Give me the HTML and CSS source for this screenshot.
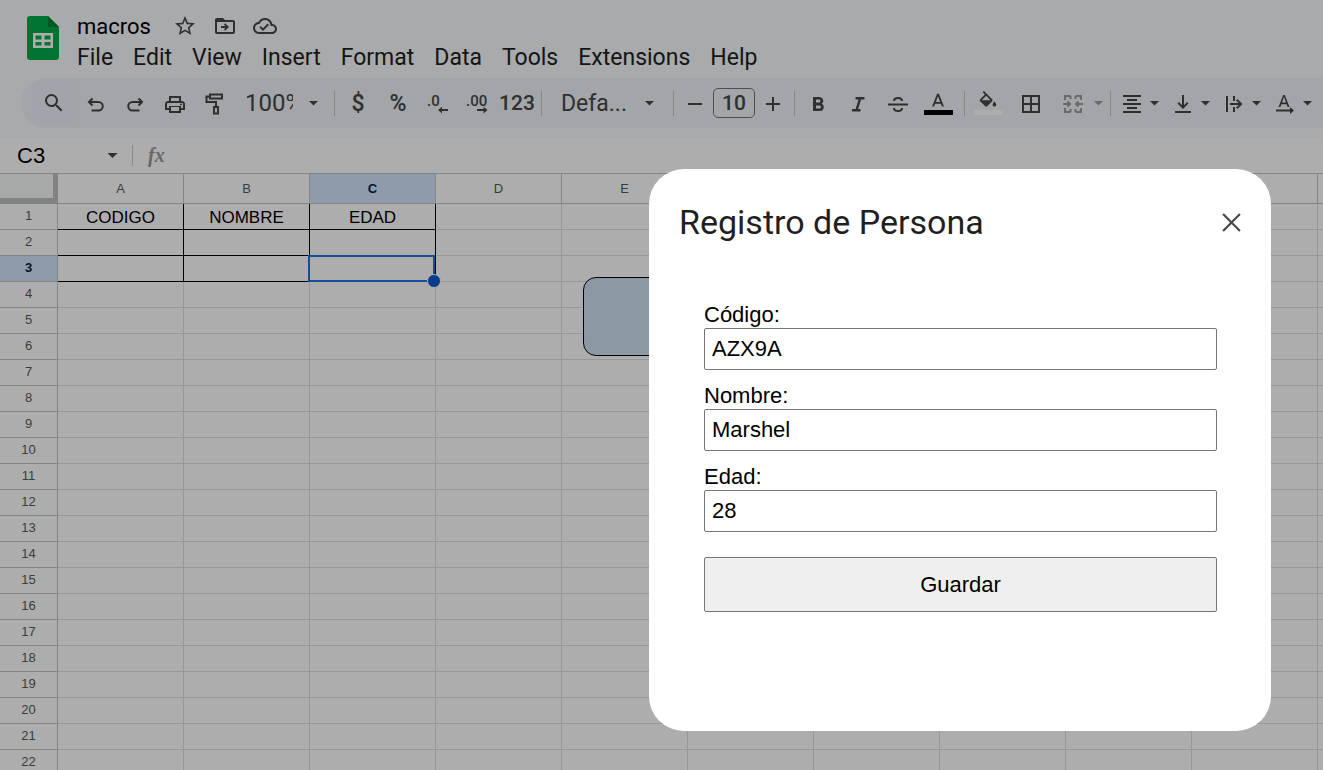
FILE: index.html
```html
<!DOCTYPE html>
<html lang="en">
<head>
<meta charset="utf-8">
<title>macros</title>
<link rel="stylesheet" href="styles.css">
</head>
<body>
<div class="app">
  <header class="header">
    <svg class="logo" viewBox="0 0 32 44" aria-hidden="true">
      <path fill="#00ac47" d="M3 0h18l11 11v30a3 3 0 0 1-3 3H3a3 3 0 0 1-3-3V3a3 3 0 0 1 3-3z"/>
      <path fill="#00832d" d="M21 0l11 11H21z"/>
      <path fill="#fff" fill-rule="evenodd" d="M6 17h20v15H6zM8.500 19.500v4h6v-4zM17.500 19.500v4h6v-4zM8.500 26v3.500h6V26zM17.500 26v3.500h6V26z"/>
    </svg>
    <div class="heading">
      <div class="title-row">
        <span class="doc-title">macros</span>
        <button class="title-btn" aria-label="Star"><svg viewBox="0 0 24 24"><path d="M22 9.240l-7.190-.620L12 2 9.190 8.630 2 9.240l5.460 4.730L5.820 21 12 17.270 18.180 21l-1.630-7.030L22 9.240zM12 15.400l-3.760 2.270 1-4.280-3.320-2.880 4.380-.380L12 6.100l1.710 4.040 4.380.380-3.320 2.880 1 4.280L12 15.400z"/></svg></button>
        <button class="title-btn" aria-label="Move"><svg viewBox="0 0 24 24"><path d="M20 6h-8l-2-2H4c-1.100 0-2 .900-2 2v12c0 1.100.900 2 2 2h16c1.100 0 2-.900 2-2V8c0-1.100-.900-2-2-2zm0 12H4V8h16v10zM12.200 9.200l-1.300 1.300 1.600 1.600H8v1.800h4.500l-1.600 1.600 1.300 1.300L16 13z"/><path d="M3 5h7l2 2.500H3z"/></svg></button>
        <button class="title-btn" aria-label="Saved"><svg viewBox="0 0 24 24"><path d="M19.350 10.040C18.670 6.590 15.640 4 12 4 9.110 4 6.600 5.640 5.350 8.040 2.340 8.360 0 10.910 0 14c0 3.310 2.690 6 6 6h13c2.760 0 5-2.240 5-5 0-2.640-2.050-4.780-4.650-4.960zM19 18H6c-2.210 0-4-1.790-4-4 0-2.050 1.530-3.760 3.560-3.970l1.070-.110.500-.950C8.080 7.140 9.940 6 12 6c2.620 0 4.880 1.860 5.390 4.430l.300 1.500 1.530.110c1.560.100 2.780 1.410 2.780 2.960 0 1.650-1.350 3-3 3zm-9-3.820l-2.090-2.090L6.500 13.500 10 17l6.010-6.010-1.410-1.410z"/></svg></button>
      </div>
      <nav class="menu">
        <button>File</button><button>Edit</button><button>View</button><button>Insert</button><button>Format</button><button>Data</button><button>Tools</button><button>Extensions</button><button>Help</button>
      </nav>
    </div>
  </header>

  <div class="toolbar" role="toolbar" aria-label="Main toolbar">
    <button class="tool search" aria-label="Search"><svg viewBox="0 0 24 24"><path d="M15.500 14h-.790l-.280-.270A6.471 6.471 0 0 0 16 9.500 6.500 6.500 0 1 0 9.500 16c1.610 0 3.090-.590 4.230-1.570l.270.280v.790l5 4.990L20.490 19l-4.990-5zm-6 0C7.010 14 5 11.990 5 9.500S7.010 5 9.500 5 14 7.010 14 9.500 11.990 14 9.500 14z"/></svg></button>
    <button class="tool" aria-label="Undo"><svg viewBox="0 0 24 24"><g class="line"><path d="M9.500 6.500L6 10l3.500 3.500M6 10h9.500a4 4 0 0 1 0 8.500H8.500"/></g></svg></button>
    <button class="tool" aria-label="Redo"><svg viewBox="0 0 24 24"><g class="line"><path d="M15.500 6.500L19 10l-3.500 3.500M19 10H9.500a4 4 0 0 0 0 8.500h7"/></g></svg></button>
    <button class="tool" aria-label="Print"><svg viewBox="0 0 24 24"><path d="M19 9h-1V4H6v5H5c-1.660 0-3 1.340-3 3v6h4v3h12v-3h4v-6c0-1.660-1.340-3-3-3zM8 6h8v3H8V6zm8 13H8v-4h8v4zm2-3v-2H6v2H4v-4c0-.550.450-1 1-1h14c.550 0 1 .450 1 1v4h-2z"/><circle cx="18" cy="12.500" r="1"/></svg></button>
    <button class="tool" aria-label="Paint format"><svg viewBox="0 0 24 24"><g class="line"><path d="M7 2.500h12v4H7zM7 4.500H3.500v5.500H13V15M11 15h4v6.500h-4z"/></g></svg></button>
    <input class="zoom" type="text" value="100%" aria-label="Zoom">
    <button class="caret" aria-label="Zoom options"></button>
    <span class="sep"></span>
    <button class="tool text">$</button>
    <button class="tool text">%</button>
    <button class="tool" aria-label="Decrease decimals"><svg viewBox="0 0 24 24"><text x="1" y="14">.0</text><path d="M12 18.100l4-3.300v2.300h6v2h-6v2.300z"/></svg></button>
    <button class="tool" aria-label="Increase decimals"><svg viewBox="0 0 24 24"><text x="0" y="14">.00</text><path d="M21.500 18.100l-4-3.300v2.300H11v2h6.500v2.300z"/></svg></button>
    <button class="tool number">123</button>
    <span class="sep"></span>
    <button class="font-name">Defa...</button>
    <button class="caret" aria-label="Font options"></button>
    <span class="sep font-sep"></span>
    <button class="tool step" aria-label="Decrease size"><svg viewBox="0 0 24 24"><path d="M5 11h14v2H5z"/></svg></button>
    <input class="size" type="text" value="10" aria-label="Font size">
    <button class="tool step" aria-label="Increase size"><svg viewBox="0 0 24 24"><path d="M11 5h2v6h6v2h-6v6h-2v-6H5v-2h6z"/></svg></button>
    <span class="sep"></span>
    <button class="tool" aria-label="Bold"><svg viewBox="0 0 24 24"><path d="M15.600 11.790c.970-.670 1.650-1.770 1.650-2.790 0-2.260-1.750-4-4-4H7v14h7.040c2.090 0 3.710-1.700 3.710-3.790 0-1.520-.860-2.820-2.150-3.420zM10 7.500h3c.830 0 1.500.670 1.500 1.500s-.670 1.500-1.500 1.500h-3v-3zm3.500 9H10v-3h3.500c.830 0 1.500.670 1.500 1.500s-.670 1.500-1.500 1.500z"/></svg></button>
    <button class="tool" aria-label="Italic"><svg viewBox="0 0 24 24"><path d="M9.500 5v2.500h3.100L9.600 17H6v2.500h8.500V17h-2.400l3-9.500H18.500V5z"/></svg></button>
    <button class="tool" aria-label="Strikethrough"><svg viewBox="0 0 24 24"><path d="M2 11.500h20v2H2z"/><g class="line"><path d="M16 9c0-2-1.800-3-4-3s-4 1-4 3M8 16c0 2 1.800 3 4 3s4-1 4-3"/></g></svg></button>
    <button class="tool color" aria-label="Text color"><svg viewBox="0 0 24 24"><path d="M11 3L5.500 17h2.250l1.120-3h6.250l1.120 3h2.250L13 3h-2zm-1.380 9L12 5.670 14.380 12H9.620z"/></svg><i class="swatch black"></i></button>
    <span class="sep"></span>
    <button class="tool color" aria-label="Fill color"><svg viewBox="0 0 24 24"><path d="M16.560 8.940L7.620 0 6.210 1.410l2.380 2.380-5.150 5.150a1.490 1.490 0 0 0 0 2.120l5.500 5.500c.290.290.680.440 1.060.440s.770-.150 1.060-.440l5.500-5.500c.590-.580.590-1.530 0-2.120zM5.210 10L10 5.210 14.790 10zM19 11.500s-2 2.170-2 3.500c0 1.100.900 2 2 2s2-.900 2-2c0-1.330-2-3.500-2-3.500z"/></svg><i class="swatch white"></i></button>
    <button class="tool borders" aria-label="Borders"><svg viewBox="0 0 24 24"><path d="M3 3v18h18V3H3zm8 16H5v-6h6v6zm0-8H5V5h6v6zm8 8h-6v-6h6v6zm0-8h-6V5h6v6z"/></svg></button>
    <span class="split muted merge"><button aria-label="Merge cells"><svg viewBox="0 0 24 24"><g class="line"><path d="M9.500 4H4v4M14.500 4H20v4M9.500 20H4v-4M14.500 20H20v-4M9.500 4v3M14.500 4v3M9.500 20v-3M14.500 20v-3M2 12h7M22 12h-7M6.500 9.500L9 12l-2.500 2.500M17.500 9.500L15 12l2.500 2.500"/></g></svg></button><button class="caret" aria-label="Merge options"></button></span>
    <span class="sep"></span>
    <span class="split"><button aria-label="Horizontal align"><svg viewBox="0 0 24 24"><path d="M3 3v2h18V3zM7 7v2h10V7zM3 11v2h18v-2zM7 15v2h10v-2zM3 19v2h18v-2z"/></svg></button><button class="caret" aria-label="Horizontal options"></button></span>
    <span class="split"><button aria-label="Vertical align"><svg viewBox="0 0 24 24"><path d="M13 13.200V3h-2v10.200l-3.100-3.100-1.400 1.400L12 17l5.500-5.500-1.400-1.400zM4 19v2h16v-2H4z"/></svg></button><button class="caret" aria-label="Vertical options"></button></span>
    <span class="split"><button aria-label="Text wrapping"><svg viewBox="0 0 24 24"><path d="M4 4h2v16H4zM11 4h2v5h-2zM11 15h2v5h-2zM8 11h8.700l-2.600-2.600L15.500 7l5 5-5 5-1.400-1.400 2.600-2.600H8z"/></svg></button><button class="caret" aria-label="Wrapping options"></button></span>
    <span class="split"><button aria-label="Text rotation"><svg viewBox="0 0 24 24"><path d="M10.200 3L5.500 15h1.900l1-2.700h5.200l1 2.700h1.900L11.800 3zM9 10.600L11 5l2 5.600zM3 17.500h14V15l4 3.500-4 3.500v-2.500H3z"/></svg></button><button class="caret" aria-label="Rotation options"></button></span>
    <span class="sep"></span>
  </div>

  <div class="formula-bar">
    <input class="cell-name" type="text" value="C3" aria-label="Name box">
    <button class="caret" aria-label="Named ranges"></button>
    <span class="sep"></span>
    <span class="fx">fx</span>
  </div>

  <main class="sheet">
    <table class="grid">
      <colgroup><col class="index-col"><col span="11" class="data-col"></colgroup>
      <thead>
        <tr><th class="corner"></th><th>A</th><th>B</th><th class="active">C</th><th>D</th><th>E</th><th>F</th><th>G</th><th>H</th><th>I</th><th>J</th><th></th></tr>
      </thead>
      <tbody id="rows">
        <tr class="framed"><th>1</th><td>CODIGO</td><td>NOMBRE</td><td>EDAD</td></tr>
        <tr class="framed"><th>2</th><td></td><td></td><td></td></tr>
        <tr class="framed"><th class="active">3</th><td></td><td></td><td><span class="selection"></span></td></tr>
      </tbody>
    </table>
    <div class="shape"></div>
  </main>
</div>

<div class="overlay">
  <section class="dialog" role="dialog" aria-labelledby="dialog-title">
    <div class="dialog-head">
      <h1 id="dialog-title">Registro de Persona</h1>
      <button class="close" aria-label="Close"><svg viewBox="0 0 18 18"><path d="M1 1l16 16M17 1L1 17"/></svg></button>
    </div>
    <form class="form">
      <div class="field"><label for="codigo">Código:</label><input id="codigo" type="text" value="AZX9A"></div>
      <div class="field"><label for="nombre">Nombre:</label><input id="nombre" type="text" value="Marshel"></div>
      <div class="field"><label for="edad">Edad:</label><input id="edad" type="text" value="28"></div>
      <button class="save" type="button">Guardar</button>
    </form>
  </section>
</div>
<script src="grid.js"></script>
</body>
</html>
```

FILE: styles.css
```css
* { box-sizing: border-box; }

body {
  margin: 0;
  height: 100vh;
  overflow: hidden;
  background: #fff;
  font-family: "Liberation Sans", Arial, sans-serif;
}

button, input {
  margin: 0;
  padding: 0;
  border: 0;
  background: none;
  color: inherit;
  font: inherit;
}

button { flex: none; }

.app {
  display: flex;
  flex-direction: column;
  height: 100vh;
  background: #f9fbfd;
}

.header {
  display: flex;
  flex: none;
  gap: 18px;
  height: 78px;
  padding: 10px 0 0 27px;
  font-family: Roboto, sans-serif;
}

.logo { width: 32px; height: 44px; margin-top: 6px; }

.title-row { display: flex; align-items: center; height: 32px; color: #444746; }

.doc-title { margin-right: 22px; color: #000; font-size: 22px; }

.title-btn { display: flex; width: 24px; margin-right: 16px; }

.title-btn svg { width: 24px; height: 24px; fill: currentColor; }

.menu { display: flex; gap: 20px; color: #1f1f1f; font-size: 23px; line-height: 32px; }

.toolbar {
  display: flex;
  flex: none;
  align-items: center;
  height: 50px;
  margin-left: 21px;
  padding-left: 11px;
  overflow: hidden;
  border-radius: 25px 0 0 25px;
  background: #f0f4f9;
  color: #444746;
  font-family: Roboto, sans-serif;
  font-weight: 400;
}

.tool { display: flex; align-items: center; justify-content: center; width: 40px; height: 42px; }

.tool.search { width: 43px; background: #f0f2fc; }

.tool.text { font-size: 23px; font-weight: 500; }

.tool.number { padding-right: 2px; font-size: 21px; font-weight: 500; }

.toolbar svg { width: 24px; height: 24px; margin-top: 2px; overflow: visible; fill: currentColor; }

.toolbar .search svg { margin-top: 0; }

.toolbar svg text { font-size: 15px; font-weight: 500; }

.line { fill: none; stroke: currentColor; stroke-width: 2; }

.zoom { flex: none; width: 48px; margin: 0 14px 0 10px; font-size: 24px; }

.caret { width: 13px; height: 24px; }

.caret::after {
  content: "";
  display: block;
  margin: 0 auto;
  width: 10px;
  height: 5px;
  background: currentColor;
  clip-path: polygon(0 0, 100% 0, 50% 100%);
}

.sep { flex: none; width: 1px; height: 25px; margin: 0 3px; background: #c7c7c7; }

.zoom + .caret { margin-right: 11px; }

.font-name { width: 68px; margin: 0 14px 0 16px; font-size: 23px; text-align: left; }

.font-sep { margin-left: 17px; }

.tool.step { width: 36px; }

.size {
  flex: none;
  width: 42px;
  height: 30px;
  border: 1px solid #747775;
  border-radius: 5px;
  font-size: 21px;
  font-weight: 500;
  text-align: center;
}

.tool.color { flex-direction: column; height: 24px; justify-content: flex-start; }

.toolbar .color svg { flex: none; width: 22px; height: 22px; margin: 0; }

.swatch { flex: none; width: 29px; height: 5px; margin-top: -3px; }

.black { background: #000; }

.white { background: #fff; }

.color + .sep { margin-left: 6px; }

.borders { width: 46px; }

.split { display: flex; flex: none; align-items: center; margin-right: 6px; }

.split button:first-child { display: flex; justify-content: center; width: 32px; }

.split.muted { color: #9a9d9f; margin-right: 2px; }

.split.merge button:first-child { width: 38px; }

.merge + .sep { margin-right: 5px; }

.formula-bar {
  display: flex;
  flex: none;
  align-items: center;
  height: 36px;
  margin-top: 10px;
  padding-left: 17px;
  border-bottom: 1px solid #c4c7c5;
  background: #fff;
  color: #444746;
}

.cell-name { width: 89px; color: #000; font-size: 22px; }

.formula-bar .caret { margin-right: 10px; }

.formula-bar .sep { height: 21px; }

.fx {
  margin-left: 12px;
  color: #9a9a9a;
  font-family: "Liberation Serif", serif;
  font-size: 20px;
  font-style: italic;
  font-weight: bold;
}

.sheet { position: relative; flex: 1; overflow: hidden; background: #fff; }

.grid { border-collapse: separate; border-spacing: 0; table-layout: fixed; width: 1444px; }

.index-col { width: 58px; }

.data-col { width: 126px; }

.grid th {
  height: 26px;
  padding: 0;
  border: solid #c4c4c4;
  border-width: 0 1px 1px 0;
  color: #575a5a;
  font-size: 13px;
  font-weight: normal;
}

.grid thead th { height: 30px; }

.grid tbody th { padding-bottom: 2px; }

.grid .corner { border: solid #c0c0c0; border-width: 0 5px 6px 0; background: #f8f9fa; }

.grid th.active { background: #d3e3fd; color: #041e49; font-weight: bold; }

.grid td {
  position: relative;
  padding: 2px 0 0;
  border: solid #e1e1e1;
  border-width: 0 1px 1px 0;
  font-size: 17px;
  line-height: 22px;
  text-align: center;
}

.grid .framed td:nth-child(-n+4) { border-color: #000; }

.selection { position: absolute; z-index: 1; inset: -1px 0 -1px -2px; border: 2px solid #1a73e8; }

.selection::after {
  content: "";
  position: absolute;
  right: -8px;
  bottom: -8px;
  width: 12px;
  height: 12px;
  border: 1px solid #fff;
  border-radius: 50%;
  background: #0b57d0;
}

.shape {
  position: absolute;
  top: 103px;
  left: 583px;
  width: 240px;
  height: 79px;
  border: 1px solid #000;
  border-radius: 13px;
  background: #cfe2f3;
}

.overlay {
  position: fixed;
  z-index: 2;
  inset: 0;
  display: flex;
  align-items: flex-start;
  justify-content: flex-end;
  padding: 169px 52px 0 0;
  background: rgba(0, 0, 0, 0.32);
}

.dialog {
  flex: 0 1 622px;
  padding: 32px 30px 119px;
  border-radius: 35px;
  background: #fff;
}

.dialog-head { display: flex; align-items: center; justify-content: space-between; }

.dialog h1 {
  margin: 0;
  color: #1f1f1f;
  font-family: Roboto, sans-serif;
  font-size: 34px;
  font-weight: 400;
  line-height: 42px;
}

.close { display: flex; }

.close svg { width: 19px; height: 19px; fill: none; stroke: #444746; stroke-width: 2; }

.form { display: flex; flex-direction: column; gap: 14px; padding: 60px 24px 0 25px; font-size: 22px; }

.field { display: flex; flex-direction: column; }

.field label { padding-bottom: 2px; line-height: 23px; }

.field input {
  height: 42px;
  padding: 0 7px;
  border: 1px solid #767676;
  border-radius: 2px;
}

.save {
  height: 55px;
  margin-top: 11px;
  border: 1px solid #767676;
  border-radius: 2px;
  background: #efefef;
}
```

FILE: grid.js
```js
const COLUMNS = 11;
const ROWS = 22;
const body = document.getElementById("rows");

for (let n = body.rows.length + 1; n <= ROWS; n++) {
  const head = document.createElement("th");
  head.textContent = n;
  body.insertRow().append(head);
}

for (const row of body.rows) {
  while (row.cells.length <= COLUMNS) row.insertCell();
}
```
